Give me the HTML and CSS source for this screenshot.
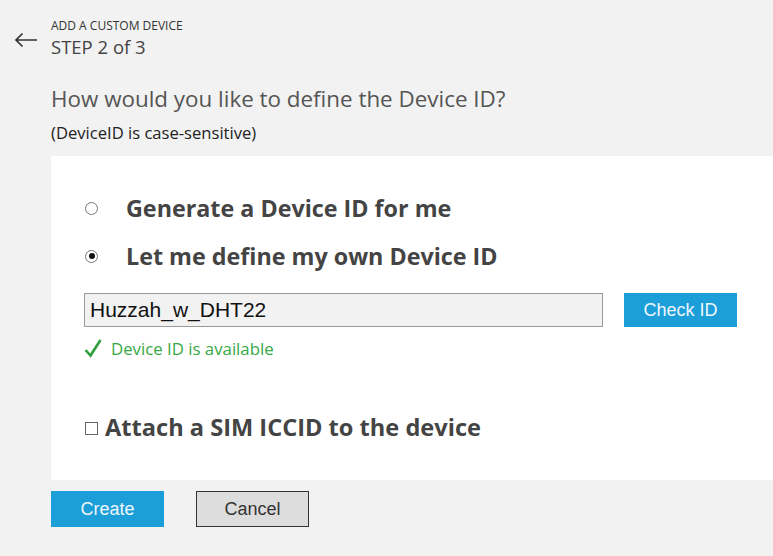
FILE: index.html
```html
<!DOCTYPE html>
<html>
<head>
<meta charset="utf-8">
<link rel="stylesheet" href="styles.css">
</head>
<body>
<div class="page">
  <header class="header">
    <div class="back">
      <svg width="24" height="16" viewBox="0 0 24 16"><path d="M8.5 1.5 L2 8 L8.5 14.5 M2 8 H23" fill="none" stroke="#333" stroke-width="1.7"/></svg>
    </div>
    <div class="titles">
      <div class="caption">ADD A CUSTOM DEVICE</div>
      <div class="step">STEP 2 of 3</div>
    </div>
  </header>
  <div class="content">
    <h1 class="question">How would you like to define the Device ID?</h1>
    <p class="note">(DeviceID is case-sensitive)</p>
    <section class="panel">
      <label class="radio-row"><span class="radio"></span><span class="opt">Generate a Device ID for me</span></label>
      <label class="radio-row"><span class="radio checked"></span><span class="opt">Let me define my own Device ID</span></label>
      <div class="id-row">
        <div class="id-input">Huzzah_w_DHT22</div>
        <button class="btn primary check">Check ID</button>
      </div>
      <div class="status">
        <svg width="18" height="20" viewBox="0 0 18 20"><path d="M1.5 12 L6.5 17.5 L16.5 2" fill="none" stroke="#2e9e3e" stroke-width="2.6"/></svg>
        <span>Device ID is available</span>
      </div>
      <label class="check-row"><span class="box"></span><span class="opt">Attach a SIM ICCID to the device</span></label>
    </section>
    <div class="actions">
      <button class="btn primary">Create</button>
      <button class="btn secondary">Cancel</button>
    </div>
  </div>
</div>
</body>
</html>
```
FILE: styles.css
```css
html, body { margin: 0; padding: 0; }
body {
  background: #f2f2f2;
  font-family: "Open Sans", "Noto Sans", sans-serif;
  color: #444;
  width: 773px;
  height: 556px;
  overflow: hidden;
}
.header {
  display: flex;
  padding: 18px 0 0 14px;
}
.back {
  width: 37px;
  padding-top: 14px;
}
.back svg { display: block; }
.caption {
  font-size: 12px;
  line-height: 15px;
  color: #333;
}
.step {
  margin-top: 2px;
  font-size: 18.5px;
  line-height: 24px;
  color: #444;
}
.content {
  padding-left: 51px;
}
.question {
  margin: 25px 0 0;
  font-weight: 400;
  font-size: 22.4px;
  line-height: 30px;
  color: #555;
}
.note {
  margin: 8px 0 0;
  font-size: 16.6px;
  line-height: 22px;
  color: #222;
}
.panel {
  margin-top: 12px;
  background: #fff;
  height: 324px;
  box-sizing: border-box;
  padding: 32px 0 0 33px;
}
.radio-row, .check-row {
  display: flex;
  align-items: center;
}
.radio-row { height: 40px; margin-bottom: 8px; }
.radio {
  width: 13px; height: 13px;
  border: 1px solid #777;
  border-radius: 50%;
  box-sizing: border-box;
  margin-left: 1px;
  margin-right: 28px;
  position: relative;
  background: #fff;
}
.radio.checked::after {
  content: "";
  position: absolute;
  left: 2.5px; top: 2.5px;
  width: 6px; height: 6px;
  border-radius: 50%;
  background: #111;
}
.opt {
  font-weight: 700;
  font-size: 23.3px;
  color: #444;
}
.id-row {
  display: flex;
  align-items: center;
  margin-top: 17px;
}
.id-input {
  width: 519px;
  height: 34px;
  box-sizing: border-box;
  border: 1px solid #9a9a9a;
  background: #f2f2f2;
  font-family: "Liberation Sans", Arial, sans-serif;
  font-size: 21px;
  line-height: 32px;
  color: #111;
  padding-left: 5px;
}
.btn {
  width: 113px;
  height: 36px;
  border: none;
  font-family: "Liberation Sans", Arial, sans-serif;
  font-size: 18px;
  padding: 0;
}
.primary {
  background: #1c9ed8;
  color: #eef6fb;
}
.check { margin-left: 21px; height: 34px; }
.status {
  display: flex;
  align-items: center;
  height: 22px;
  margin-top: 10px;
  font-size: 16.8px;
  color: #37a846;
}
.status svg { margin-right: 9px; }
.check-row { margin-top: 52px; height: 32px; }
.check-row .opt { font-size: 23.6px; }
.box {
  width: 13px; height: 13px;
  border: 1px solid #666;
  box-sizing: border-box;
  margin-left: 1px;
  margin-right: 7px;
  margin-top: 2px;
}
.actions {
  display: flex;
  gap: 32px;
  margin-top: 11px;
}
.secondary {
  background: #ddd;
  border: 1px solid #333;
  color: #333;
}
```
